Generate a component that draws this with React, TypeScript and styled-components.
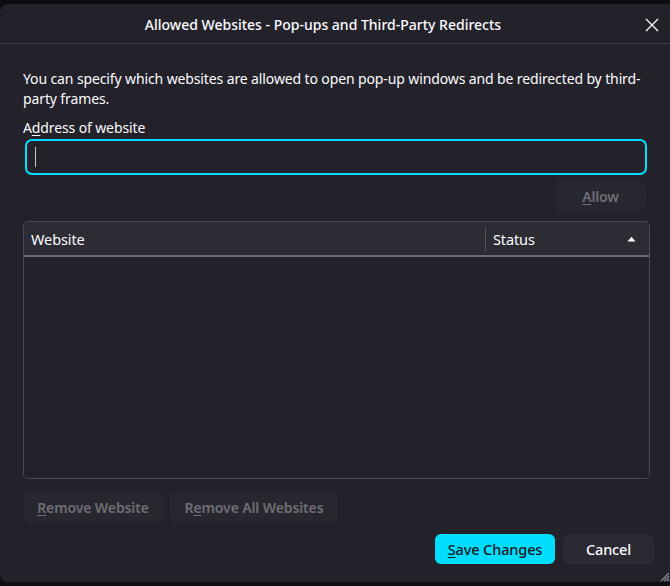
import React from "react";
import styled, { createGlobalStyle } from "styled-components";

const Global = createGlobalStyle`
  html, body { margin: 0; padding: 0; background: #0e0e11; }
  body { font-family: "Noto Sans", "Open Sans", sans-serif; color: #fbfbfe; }
  * { box-sizing: border-box; }
`;

const Frame = styled.div`
  width: 670px;
  height: 586px;
  padding: 4px 0 4px 0;
  overflow: hidden;
  position: relative;
`;

const Dialog = styled.div`
  height: 578px;
  background: #23222b;
  border-radius: 8px 0 0 8px;
  display: flex;
  flex-direction: column;
`;

const TitleBar = styled.div`
  height: 40px;
  padding-top: 2px;
  border-bottom: 1px solid #3f3e48;
  display: flex;
  align-items: center;
  justify-content: center;
  position: relative;
`;

const Title = styled.div`
  font-size: 14px;
  font-weight: 500;
  color: #fbfbfe;
  margin-left: -24px;
`;

const CloseBtn = styled.div`
  position: absolute;
  right: 10px;
  top: 12px;
  width: 16px;
  height: 16px;
`;

const Body = styled.div`
  flex: 1;
  display: flex;
  flex-direction: column;
  padding: 25px 16px 18px 23px;
  font-size: 14px;
  letter-spacing: -0.12px;
`;

const Desc = styled.p`
  margin: 0;
  line-height: 20px;
  width: 625px;
`;

const Label = styled.div`
  margin-top: 9px;
  line-height: 20px;
`;

const U = styled.span`
  text-decoration: underline;
  text-underline-offset: 2px;
  text-decoration-thickness: 1px;
`;

const Input = styled.div`
  margin: 1px 7px 0 2px;
  height: 36px;
  border: 2px solid #00ddff;
  border-radius: 7px;
  background: #23222b;
  display: flex;
  align-items: center;
  padding-left: 8px;
`;

const Caret = styled.div`
  width: 1px;
  height: 20px;
  background: #c8c8cc;
`;

const AllowRow = styled.div`
  display: flex;
  justify-content: flex-end;
  margin-top: 6px;
  padding-right: 8px;
`;

const Button = styled.div<{ $variant?: "primary" | "disabled" | "normal"; $w?: number }>`
  height: 30px;
  width: ${(p) => (p.$w ? `${p.$w}px` : "auto")};
  border-radius: 6px;
  display: flex;
  align-items: center;
  justify-content: center;
  font-size: ${(p) => (p.$variant === "disabled" ? "14px" : "14.5px")};
  font-weight: ${(p) => (p.$variant === "disabled" ? 600 : 500)};
  background: ${(p) =>
    p.$variant === "primary" ? "#00ddff" : p.$variant === "disabled" ? "#28272f" : "#2b2a33"};
  color: ${(p) =>
    p.$variant === "primary" ? "#15141a" : p.$variant === "disabled" ? "#6f6e76" : "#fbfbfe"};
`;

const Table = styled.div`
  margin-top: 10px;
  margin-right: 4px;
  height: 258px;
  border: 1px solid #4a4953;
  border-radius: 5px;
  overflow: hidden;
  display: flex;
  flex-direction: column;
`;

const Header = styled.div`
  height: 35px;
  background: #2d2c35;
  border-bottom: 2px solid #6e6d76;
  display: grid;
  grid-template-columns: 462px 1fr;
  align-items: center;
`;

const HeaderCell = styled.div`
  height: 100%;
  display: flex;
  align-items: center;
  justify-content: space-between;
  padding: 0 13px 0 7px;
  font-size: 14.5px;
  position: relative;
`;

const Divider = styled.div`
  position: absolute;
  left: -1px;
  top: 6px;
  bottom: 4px;
  width: 1px;
  background: #56555e;
`;

const TableBody = styled.div`
  flex: 1;
  background: #23222b;
`;

const RemoveRow = styled.div`
  display: flex;
  gap: 7px;
  margin-top: 13px;
`;

const FooterRow = styled.div`
  display: flex;
  justify-content: flex-end;
  gap: 8px;
  margin-top: 12px;
`;

const Grip = styled.svg`
  position: absolute;
  right: 0;
  bottom: 4px;
`;

export default function App() {
  return (
    <>
      <Global />
      <Frame>
        <Dialog>
          <TitleBar>
            <Title>Allowed Websites - Pop-ups and Third-Party Redirects</Title>
            <CloseBtn>
              <svg width="16" height="16" viewBox="0 0 16 16">
                <path d="M2 2 L14 14 M14 2 L2 14" stroke="#fbfbfe" strokeWidth="1.3" />
              </svg>
            </CloseBtn>
          </TitleBar>
          <Body>
            <Desc>
              You can specify which websites are allowed to open pop-up windows and be redirected by third-party frames.
            </Desc>
            <Label>
              A<U>d</U>dress of website
            </Label>
            <Input>
              <Caret />
            </Input>
            <AllowRow>
              <Button $variant="disabled" $w={91}>
                <span>
                  <U>A</U>llow
                </span>
              </Button>
            </AllowRow>
            <Table>
              <Header>
                <HeaderCell>Website</HeaderCell>
                <HeaderCell>
                  <Divider />
                  <span>Status</span>
                  <svg width="9" height="6" viewBox="0 0 9 6">
                    <path d="M0.5 5.5 L4.5 0.8 L8.5 5.5 Z" fill="#fbfbfe" />
                  </svg>
                </HeaderCell>
              </Header>
              <TableBody />
            </Table>
            <RemoveRow>
              <Button $variant="disabled" $w={140}>
                <span>
                  <U>R</U>emove Website
                </span>
              </Button>
              <Button $variant="disabled" $w={168}>
                <span>
                  R<U>e</U>move All Websites
                </span>
              </Button>
            </RemoveRow>
            <FooterRow>
              <Button $variant="primary" $w={120}>
                <span>
                  <U>S</U>ave Changes
                </span>
              </Button>
              <Button $variant="normal" $w={91}>
                Cancel
              </Button>
            </FooterRow>
          </Body>
        </Dialog>
        <Grip width="12" height="12" viewBox="0 0 12 12">
          <path d="M11 3 L3 11 M11 6 L6 11 M11 9 L9 11" stroke="#8a8990" strokeWidth="1.2" />
        </Grip>
      </Frame>
    </>
  );
}
